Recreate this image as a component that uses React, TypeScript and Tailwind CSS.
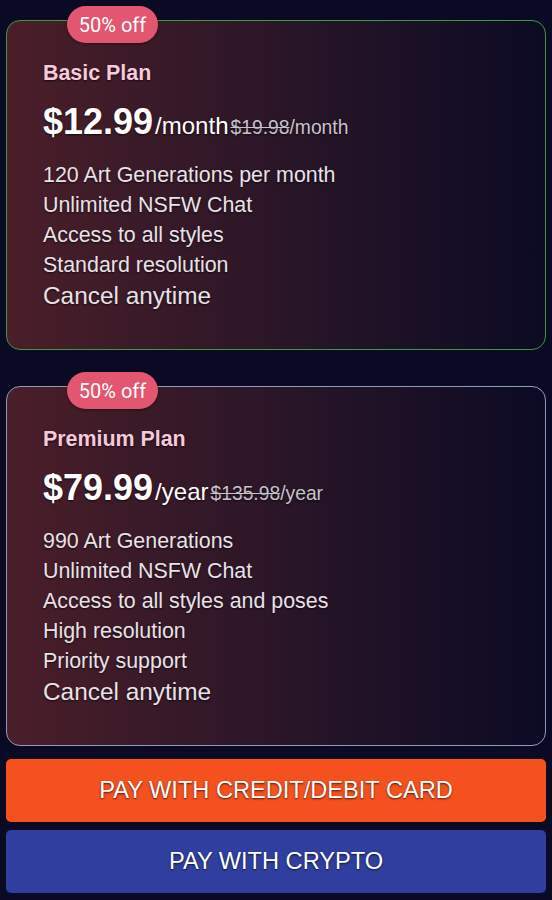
import React from 'react'

interface Plan {
  name: string
  price: string
  period: string
  oldPrice: string
  features: string[]
  borderClass: string
}

const PLANS: Plan[] = [
  {
    name: 'Basic Plan',
    price: '$12.99',
    period: '/month',
    oldPrice: '$19.98',
    features: ['120 Art Generations per month', 'Unlimited NSFW Chat', 'Access to all styles', 'Standard resolution'],
    borderClass: 'border-[#3d9a3a]',
  },
  {
    name: 'Premium Plan',
    price: '$79.99',
    period: '/year',
    oldPrice: '$135.98',
    features: ['990 Art Generations', 'Unlimited NSFW Chat', 'Access to all styles and poses', 'High resolution', 'Priority support'],
    borderClass: 'border-[#8e9bbd]',
  },
]

const shadow = '[text-shadow:0_1px_2px_rgba(0,0,0,0.7)]'

function PlanCard({ plan }: { plan: Plan }) {
  return (
    <div
      className={`relative rounded-[14px] border ${plan.borderClass} bg-gradient-to-r from-[#4b1e29] to-[#0c0a24] pl-[36px] pr-4 pt-[38px] pb-[37px]`}
    >
      {/* Discount badge */}
      <span className="absolute -top-[15px] left-[60px] flex h-[37px] w-[91px] items-center justify-center rounded-full bg-[#e2566f] text-[20px] text-white font-['Roboto',sans-serif] shadow-[0_1px_3px_rgba(0,0,0,0.4)]">
        50% off
      </span>

      <h3 className={`text-[21.4px] leading-[28px] font-bold text-[#f6cadb] ${shadow}`}>{plan.name}</h3>

      <div className={`mt-[15px] flex items-baseline leading-[40px] text-white ${shadow}`}>
        <span className="text-[36px] font-bold">{plan.price}</span>
        <span className="ml-[2px] text-[24px]">{plan.period}</span>
        <span className="ml-[2px] text-[19.3px] text-[#c9c3cc]">
          <span className="line-through">{plan.oldPrice}</span>
          {plan.period}
        </span>
      </div>

      <ul className={`mt-[12px] text-[#e9e2e8] ${shadow}`}>
        {plan.features.map((f) => (
          <li key={f} className="text-[21.4px] leading-[30px]">
            {f}
          </li>
        ))}
        <li className="text-[24.4px] leading-[32px]">Cancel anytime</li>
      </ul>
    </div>
  )
}

export default function App() {
  return (
    <div className="min-h-[900px] bg-[#0b0a24] px-[6px] pt-[20px] font-['Liberation_Sans',Arial,sans-serif]">
      <div className="flex flex-col gap-[36px]">
        {PLANS.map((p) => (
          <PlanCard key={p.name} plan={p} />
        ))}
      </div>

      <div className="mt-[13px] flex flex-col gap-[8px]">
        <button className={`h-[63px] w-full rounded-[5px] bg-[#f4511e] text-[23.6px] text-white uppercase ${shadow}`}>
          Pay with Credit/Debit Card
        </button>
        <button className={`h-[63px] w-full rounded-[5px] bg-[#303f9f] text-[23.6px] text-white uppercase ${shadow}`}>
          Pay with Crypto
        </button>
      </div>
    </div>
  )
}
